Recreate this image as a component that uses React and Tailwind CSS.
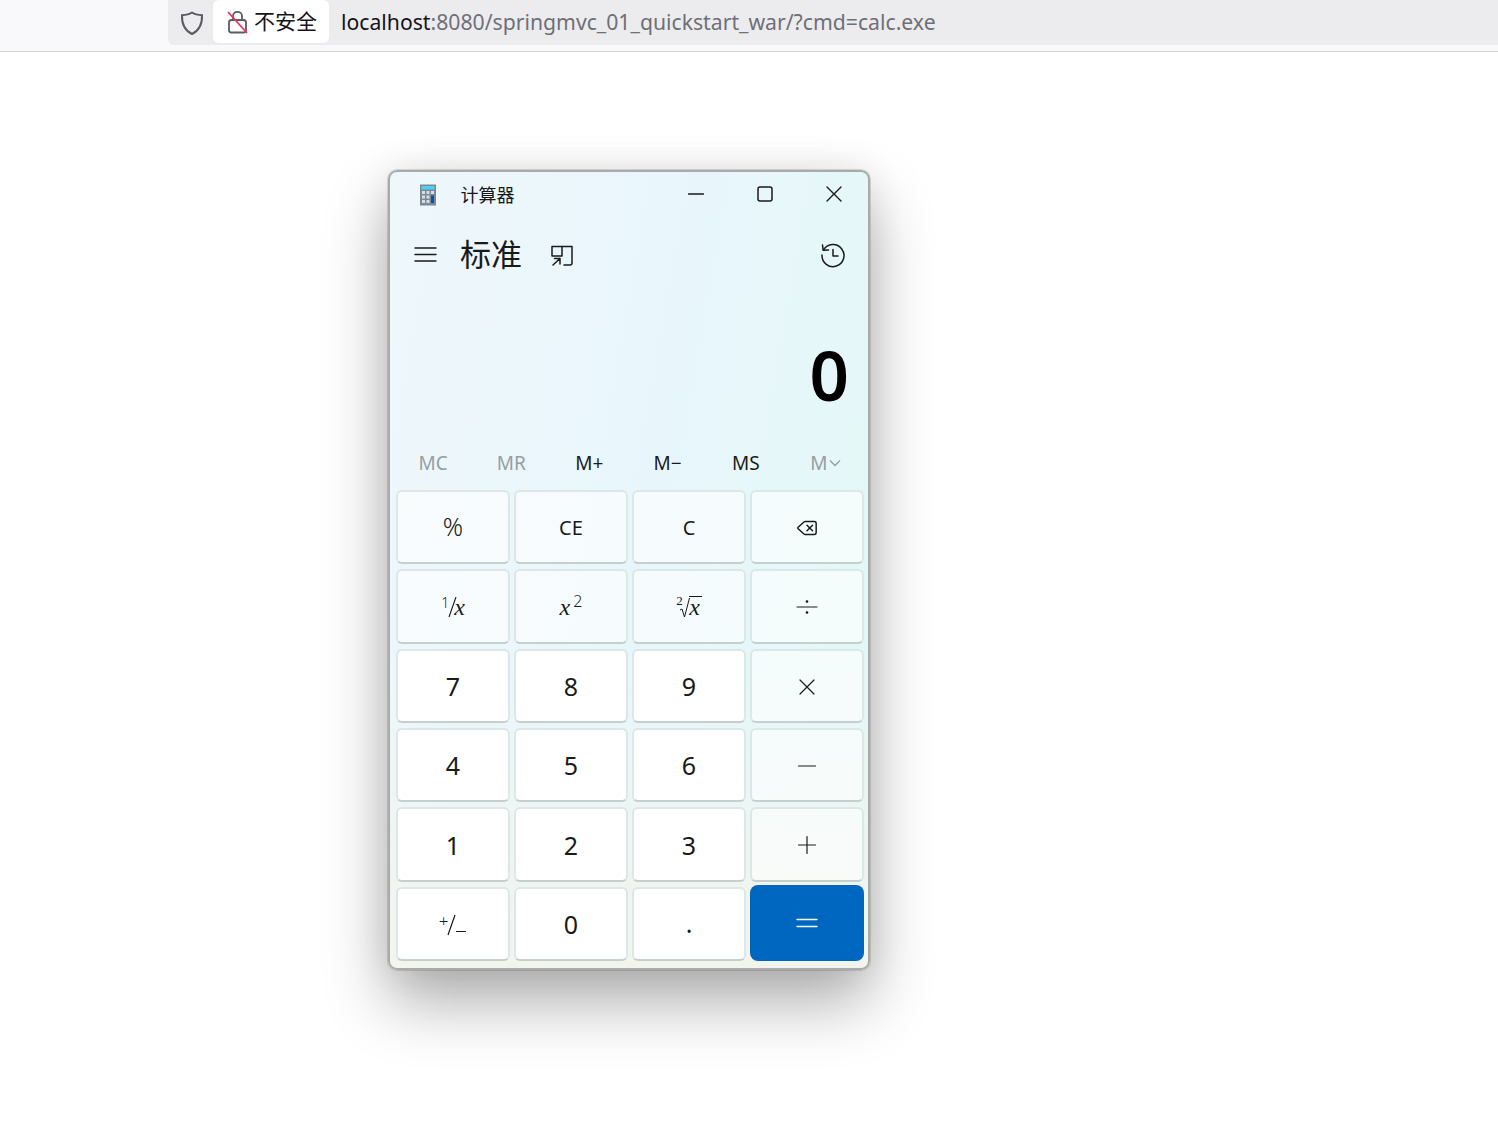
import { Delete } from "lucide-react";

const cjk = "font-['Noto_Sans','Noto_Sans_CJK_SC',sans-serif]";
const serif = "font-['Liberation_Serif',serif]";

const Icon = ({ className, children, size = 24, box = 24, sw = 1.5 }) => (
  <svg
    width={size}
    height={size}
    viewBox={`0 0 ${box} ${box}`}
    fill="none"
    stroke="currentColor"
    strokeWidth={sw}
    strokeLinecap="round"
    strokeLinejoin="round"
    className={className}
  >
    {children}
  </svg>
);

const CalcLogo = () => (
  <svg width="18" height="22" viewBox="0 0 18 22">
    <rect x="1" y="0.5" width="16" height="21" fill="#7a8a96" />
    <rect x="2.5" y="2" width="13" height="3.5" fill="#4fd0f0" />
    <rect x="3" y="7" width="3" height="3" fill="#d7dde2" />
    <rect x="7.5" y="7" width="3" height="3" fill="#d7dde2" />
    <rect x="12" y="7" width="3" height="3" fill="#d7dde2" />
    <rect x="3" y="11.5" width="3" height="3" fill="#d7dde2" />
    <rect x="7.5" y="11.5" width="3" height="3" fill="#d7dde2" />
    <rect x="3" y="16" width="3" height="3" fill="#d7dde2" />
    <rect x="7.5" y="16" width="3" height="3" fill="#d7dde2" />
    <rect x="12" y="11.5" width="3" height="7.5" fill="#114f96" />
  </svg>
);

const Browser = () => (
  <div className="h-[52px] bg-[#f9f9fb] border-b border-[#d4d4d8] pl-[168px]">
    <div className="h-[45px] bg-[#ececef] rounded-bl-md flex items-center">
      <div className="w-[45px] flex justify-center text-[#5b5b66] pl-[2px]">
        <svg width="24" height="26" viewBox="0 0 24 26" fill="none" stroke="currentColor" strokeWidth="2">
          <path d="M12 2.5 C15 4.5 18 5 22 5.2 C22.3 13 20 20 12 24 C4 20 1.7 13 2 5.2 C6 5 9 4.5 12 2.5 Z" />
        </svg>
      </div>
      <div className={`h-[43px] w-[116px] -mt-[2px] bg-white rounded-md flex items-center pl-[14px] text-[21px] text-[#15141a] ${cjk}`}>
        <svg width="22" height="26" viewBox="0 0 22 26" fill="none" className="shrink-0 mr-[5px]">
          <path d="M6 11 V7 C6 1.5 15 1.5 15 7 V11" stroke="#5b5b66" strokeWidth="1.8" />
          <rect x="2" y="11" width="17" height="12.5" rx="2.5" stroke="#5b5b66" strokeWidth="1.8" />
          <path d="M1 3 L20 24" stroke="#f0335a" strokeWidth="1.8" />
        </svg>
        不安全
      </div>
      <div className={`ml-3 -mt-[2px] text-[21.2px] whitespace-nowrap text-[#6f6f78] ${cjk}`}>
        <span className="text-[#15141a]">localhost</span>:8080/springmvc_01_quickstart_war/?cmd=calc.exe
      </div>
    </div>
  </div>
);

const OneOverX = () => (
  <span className={`flex items-center text-[24px] leading-none text-[#1a1a1a] ${serif}`}>
    <span className={`text-[14px] font-light -mt-[9px] ${cjk}`}>1</span>
    <svg width="9" height="22" viewBox="0 0 9 22" stroke="currentColor" strokeWidth="1.1" className="-ml-[1px] -mr-[3px]">
      <path d="M8 1 L1 21" />
    </svg>
    <span className="italic">x</span>
  </span>
);

const XSquared = () => (
  <span className={`flex items-center text-[24px] leading-none text-[#1a1a1a] ${serif}`}>
    <span className="italic">x</span>
    <span className={`text-[16px] font-light -mt-[12px] ml-[3px] ${cjk}`}>2</span>
  </span>
);

const CubeRoot = () => (
  <span className={`flex items-center text-[24px] leading-none text-[#1a1a1a] ${serif}`}>
    <span className="text-[13px] -mt-[13px] -mr-[4px]">2</span>
    <svg width="11" height="21" viewBox="0 0 11 21" fill="none" stroke="currentColor" strokeWidth="1">
      <path d="M1 13 L3 12 L5.5 20 L10.5 1" />
    </svg>
    <span className="italic border-t border-[#1a1a1a] leading-[20px] pr-[2px] -ml-[0.5px] -mt-[1px]">x</span>
  </span>
);

const PlusMinus = () => (
  <span className={`flex items-center text-[#1a1a1a] -ml-[1px] ${cjk}`}>
    <span className="text-[17px] font-light leading-none -mt-[9px]">+</span>
    <svg width="9" height="22" viewBox="0 0 9 22" stroke="currentColor" strokeWidth="1.2" className="-mx-[1px]">
      <path d="M8 1 L1 21" />
    </svg>
    <span className="w-[10px] h-px bg-[#1a1a1a] mt-[13px] ml-[1px]" />
  </span>
);

const Divide = () => (
  <Icon size={22} box={22} sw={1.1}>
    <path d="M1 11 H21" />
    <circle cx="11" cy="5.5" r="0.8" fill="currentColor" />
    <circle cx="11" cy="16.5" r="0.8" fill="currentColor" />
  </Icon>
);

const Times = () => (
  <Icon size={16} box={16} sw={1.2}>
    <path d="M1 1 L15 15 M15 1 L1 15" />
  </Icon>
);

const Minus = () => (
  <Icon size={20} box={20} sw={1.2}>
    <path d="M1.5 10 H18.5" />
  </Icon>
);

const Plus = () => (
  <Icon size={20} box={20} sw={1.2}>
    <path d="M1.5 10 H18.5 M10 1.5 V18.5" />
  </Icon>
);

const keys = [
  { label: "%", kind: "fn", text: "text-[25px] font-light" },
  { label: "CE", kind: "fn", text: "text-[20px] font-normal pt-[2px]" },
  { label: "C", kind: "fn", text: "text-[20px] font-normal pt-[2px]" },
  { label: <Delete size={22} strokeWidth={1.6} className="-mt-[1px]" />, kind: "fn" },
  { label: <OneOverX />, kind: "fn" },
  { label: <XSquared />, kind: "fn" },
  { label: <CubeRoot />, kind: "fn" },
  { label: <Divide />, kind: "fn" },
  { label: "7", kind: "num" },
  { label: "8", kind: "num" },
  { label: "9", kind: "num" },
  { label: <Times />, kind: "fn" },
  { label: "4", kind: "num" },
  { label: "5", kind: "num" },
  { label: "6", kind: "num" },
  { label: <Minus />, kind: "fn" },
  { label: "1", kind: "num" },
  { label: "2", kind: "num" },
  { label: "3", kind: "num" },
  { label: <Plus />, kind: "fn" },
  { label: <PlusMinus />, kind: "num" },
  { label: "0", kind: "num" },
  { label: <span className="translate-y-[-1px]">.</span>, kind: "num" },
  {
    label: (
      <Icon size={24} box={24} sw={1.4}>
        <path d="M2 8.5 H22 M2 15.5 H22" />
      </Icon>
    ),
    kind: "eq",
  },
];

const Key = ({ k }) => {
  if (k.kind === "eq") {
    return (
      <button className="-mt-[2px] rounded-lg bg-[#0067c0] text-white flex items-center justify-center">
        {k.label}
      </button>
    );
  }
  const bg = k.kind === "num" ? "bg-white" : "bg-white/60";
  return (
    <button
      className={`rounded-md border-2 border-[#dce7e7] border-b-[#c5cfcd] flex items-center justify-center text-[#1a1a1a] ${bg} ${k.text || "text-[25px] font-normal pt-[2px]"}`}
    >
      {k.label}
    </button>
  );
};

const memory = [
  { t: "MC", off: true },
  { t: "MR", off: true },
  { t: "M+" },
  { t: "M−" },
  { t: "MS" },
];

export default function App() {
  return (
    <div className={`min-h-[1143px] bg-white ${cjk}`}>
      <Browser />
      <div className="pt-[118px] pl-[388px]">
        <div className="w-[482px] h-[800px] rounded-[9px] border-2 border-[#a9abab] bg-[linear-gradient(180deg,transparent_60%,#f3f4ee_100%),linear-gradient(100deg,#eff7fb_0%,#e8f6fb_50%,#e3f8f6_100%)] shadow-[0_0_0_1px_rgba(0,0,0,0.12),0_32px_64px_rgba(0,0,0,0.32),0_0_36px_rgba(0,0,0,0.08)] overflow-hidden flex flex-col">
          <div className="h-[46px] flex items-center text-[#1a1a1a]">
            <div className="w-[71px] pl-[29px] flex">
              <CalcLogo />
            </div>
            <span className="text-[18px] leading-none -ml-[0.5px]">计算器</span>
            <div className="ml-auto flex items-center">
              <div className="w-[69px] flex justify-center">
                <Icon size={16} box={16} sw={1.4} className="-mt-[2px]">
                  <path d="M0.5 8 H15.5" />
                </Icon>
              </div>
              <div className="w-[69px] flex justify-center">
                <Icon size={16} box={16} sw={1.5} className="-mt-[2px]">
                  <rect x="1" y="1" width="14" height="14" rx="2" />
                </Icon>
              </div>
              <div className="w-[69px] flex justify-center">
                <Icon size={16} box={16} sw={1.4} className="-mt-[2px]">
                  <path d="M1 1 L15 15 M15 1 L1 15" />
                </Icon>
              </div>
            </div>
          </div>

          <div className="h-[73px] flex items-center text-[#1a1a1a]">
            <div className="w-[71px] pl-[24px]">
              <Icon size={23} box={23} sw={1.4}>
                <path d="M1 5 H22 M1 11.5 H22 M1 18 H22" />
              </Icon>
            </div>
            <span className="text-[31px] leading-none -ml-[1px]">标准</span>
            <div className="ml-[28px]">
              <Icon size={24} box={24} sw={1.5}>
                <path d="M2 13 V3.5 H22 V20 C22 21 21.5 22 20 22 H14 M2 13 H12 V3.5" />
                <path d="M3 22 L10 15.5 M4.5 15.5 H10 V21" />
              </Icon>
            </div>
            <div className="ml-auto pr-[22px]">
              <Icon size={26} box={26} sw={1.5}>
                <path d="M3.5 8 A11 11 0 1 1 2 13" />
                <path d="M2.5 3 L3.2 8.3 L8.5 8" />
                <path d="M13 7.5 V14 H18" />
              </Icon>
            </div>
          </div>

          <div className="h-[143px] pt-[23px] flex items-center justify-end pr-[19px] text-[69px] leading-none font-semibold text-black">
            0
          </div>

          <div className="h-[49px] pl-[4px] pr-[5px] pt-[9px] grid grid-cols-6 items-center text-[19px]">
            {memory.map((m) => (
              <span key={m.t} className={`text-center ${m.off ? "text-[#959ea1]" : "text-[#1a1a1a]"}`}>
                {m.t}
              </span>
            ))}
            <span className="flex items-center justify-center text-[#959ea1] pl-[3px]">
              M
              <svg width="12" height="8" viewBox="0 0 12 8" fill="none" stroke="currentColor" strokeWidth="1.3" className="ml-[1px]">
                <path d="M1 1.5 L6 6.5 L11 1.5" />
              </svg>
            </span>
          </div>

          <div className="h-[471px] mt-[7px] pl-[6px] pr-[4px] grid grid-cols-4 grid-rows-6 gap-x-[4px] gap-y-[5px]">
            {keys.map((k, i) => (
              <Key key={i} k={k} />
            ))}
          </div>
        </div>
      </div>
    </div>
  );
}
